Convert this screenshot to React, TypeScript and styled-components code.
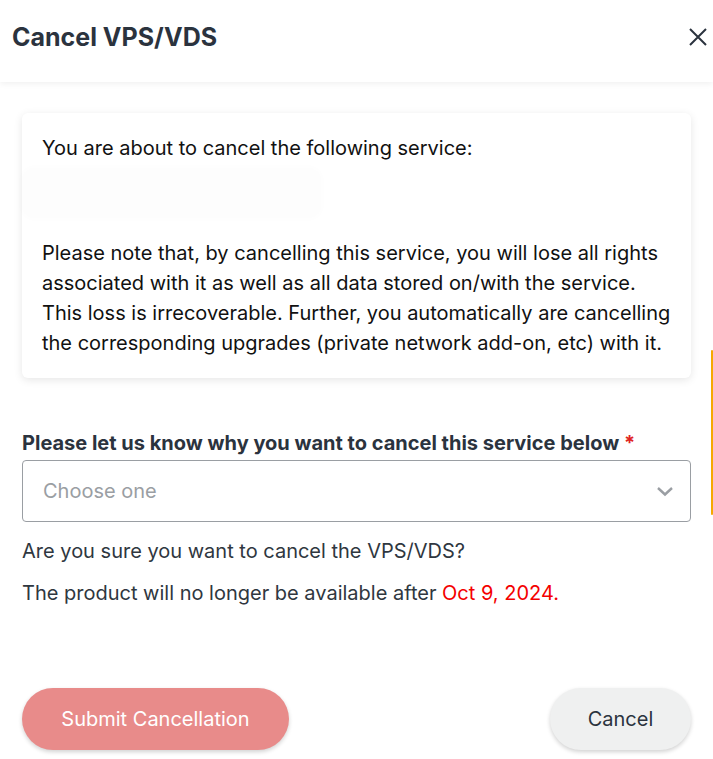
import styled, { createGlobalStyle } from "styled-components";

const GlobalStyle = createGlobalStyle`
  html, body {
    margin: 0;
    padding: 0;
    background: #fff;
  }
  body {
    font-family: Inter, "Noto Sans", sans-serif;
    overflow: hidden;
  }
  * {
    box-sizing: border-box;
  }
`;

const Modal = styled.div`
  width: 713px;
  height: 759px;
  position: relative;
  background: #fff;
`;

const Header = styled.header`
  height: 82px;
  display: flex;
  align-items: center;
  justify-content: space-between;
  padding: 0 3px 8px 12px;
  box-shadow: 0 2px 6px rgba(0, 0, 0, 0.06);
  position: relative;
  z-index: 1;
`;

const Title = styled.h2`
  margin: 0;
  font-size: 25px;
  font-weight: 700;
  color: #2b333e;
`;

const CloseButton = styled.button`
  border: none;
  background: none;
  padding: 0;
  width: 24px;
  height: 24px;
  display: flex;
  align-items: center;
  justify-content: center;
  color: #2b333e;
  cursor: pointer;
`;

const Body = styled.div`
  padding: 31px 22px 0 22px;
`;

const Card = styled.div`
  border-radius: 6px;
  background: #fff;
  box-shadow: 0 2px 8px rgba(0, 0, 0, 0.1);
  padding: 20px;
  position: relative;
`;

const CardText = styled.p`
  margin: 0;
  font-size: 20px;
  line-height: 30px;
  color: #111;
`;

const Redacted = styled.div`
  height: 50px;
  margin: 5px 350px 20px -20px;
  border-radius: 12px;
  background: #fdfdfd;
  box-shadow: 0 0 10px rgba(0, 0, 0, 0.015);
`;

const Field = styled.div`
  margin-top: 52px;
`;

const Label = styled.label`
  display: block;
  font-size: 20px;
  line-height: 26px;
  font-weight: 700;
  color: #2b333e;
  margin-bottom: 4px;
`;

const Required = styled.span`
  color: #e02424;
`;

const Select = styled.div`
  height: 62px;
  border: 1px solid #9a9ea3;
  border-radius: 4px;
  display: flex;
  align-items: center;
  justify-content: space-between;
  padding: 0 16px 0 20px;
  font-size: 20px;
  color: #9a9ea3;
`;

const Note = styled.p<{ $gap: number }>`
  margin: ${(p) => p.$gap}px 0 0 0;
  font-size: 20px;
  line-height: 26px;
  color: #2f3740;
`;

const DateText = styled.span`
  color: #f40000;
`;

const Actions = styled.div`
  display: flex;
  justify-content: space-between;
  margin-top: 82px;
`;

const PillButton = styled.button<{ $variant: "danger" | "plain" }>`
  height: 62px;
  width: ${(p) => (p.$variant === "danger" ? "267px" : "141px")};
  border: none;
  border-radius: 31px;
  font-family: Inter, "Noto Sans", sans-serif;
  font-size: 20px;
  padding: 0;
  background: ${(p) => (p.$variant === "danger" ? "#e88b8a" : "#eff0f0")};
  color: ${(p) => (p.$variant === "danger" ? "#fff" : "#2b333e")};
  box-shadow: 0 2px 4px rgba(0, 0, 0, 0.18);
  cursor: pointer;
`;

const ScrollHint = styled.div`
  position: absolute;
  right: 0;
  top: 350px;
  width: 2px;
  height: 165px;
  border-radius: 2px;
  background: #f5a800;
`;

export default function App() {
  return (
    <Modal>
      <GlobalStyle />
      <Header>
        <Title>Cancel VPS/VDS</Title>
        <CloseButton aria-label="Close">
          <svg width="18" height="18" viewBox="0 0 18 18" fill="none">
            <path d="M1 1L17 17M17 1L1 17" stroke="currentColor" strokeWidth="2" />
          </svg>
        </CloseButton>
      </Header>
      <Body>
        <Card>
          <CardText>You are about to cancel the following service:</CardText>
          <Redacted />
          <CardText>
            Please note that, by cancelling this service, you will lose all rights
            associated with it as well as all data stored on/with the service.
            This loss is irrecoverable. Further, you automatically are cancelling
            the corresponding upgrades (private network add-on, etc) with it.
          </CardText>
        </Card>
        <Field>
          <Label>
            Please let us know why you want to cancel this service below <Required>*</Required>
          </Label>
          <Select>
            <span>Choose one</span>
            <svg width="18" height="18" viewBox="0 0 18 18" fill="none">
              <path d="M2 6L9 12.5L16 6" stroke="#9a9ea3" strokeWidth="2.4" />
            </svg>
          </Select>
        </Field>
        <Note $gap={16}>Are you sure you want to cancel the VPS/VDS?</Note>
        <Note $gap={16}>
          The product will no longer be available after <DateText>Oct 9, 2024.</DateText>
        </Note>
        <Actions>
          <PillButton $variant="danger">Submit Cancellation</PillButton>
          <PillButton $variant="plain">Cancel</PillButton>
        </Actions>
      </Body>
      <ScrollHint />
    </Modal>
  );
}
